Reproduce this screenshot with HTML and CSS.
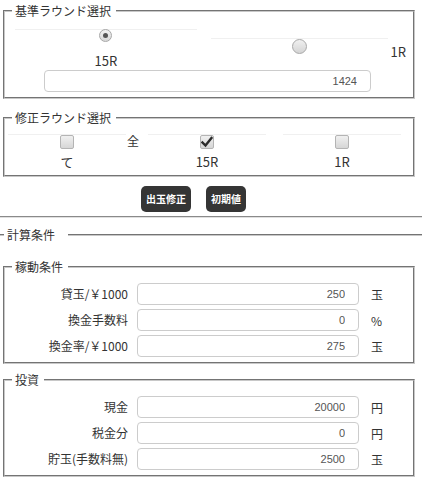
FILE: index.html
```html
<!DOCTYPE html>
<html lang="ja">
<head>
<meta charset="utf-8">
<title>計算</title>
<link rel="stylesheet" href="styles.css">
</head>
<body>
<fieldset class="box box-base">
  <legend>基準ラウンド選択</legend>
  <div class="base-opts">
    <div class="cell cell-a">
      <span class="radio radio-on"></span>
      <span class="opt-lbl">15R</span>
    </div>
    <div class="cell cell-b">
      <span class="radio"></span>
    </div>
    <span class="side-lbl">1R</span>
  </div>
  <div class="base-input"><input class="field field-wide" type="text" value="1424" readonly></div>
</fieldset>

<fieldset class="box box-fix">
  <legend>修正ラウンド選択</legend>
  <div class="fix-opts">
    <div class="cell ccell c1"><span class="check"></span><span class="opt-lbl opt-lbl-c">て</span></div>
    <span class="all">全</span>
    <div class="cell ccell c2"><span class="check check-on"><svg width="12" height="12" viewBox="0 0 12 12"><path d="M1.5 6.5 L4.5 9.5 L10.5 2" fill="none" stroke="#2b2b2b" stroke-width="2.4" stroke-linecap="square"/></svg></span><span class="opt-lbl opt-lbl-c">15R</span></div>
    <div class="cell ccell c3"><span class="check"></span><span class="opt-lbl opt-lbl-c">1R</span></div>
  </div>
</fieldset>

<div class="actions">
  <button class="btn" type="button">出玉修正</button>
  <button class="btn" type="button">初期値</button>
</div>
<div class="rule"></div>

<fieldset class="calc">
  <legend>計算条件</legend>

  <fieldset class="box box-rows box-work">
    <legend>稼動条件</legend>
    <div class="rows">
      <label class="row-lbl">貸玉/￥1000</label><input class="field" type="text" value="250" readonly><span class="unit">玉</span>
      <label class="row-lbl">換金手数料</label><input class="field" type="text" value="0" readonly><span class="unit">%</span>
      <label class="row-lbl">換金率/￥1000</label><input class="field" type="text" value="275" readonly><span class="unit">玉</span>
    </div>
  </fieldset>

  <fieldset class="box box-rows box-invest">
    <legend>投資</legend>
    <div class="rows">
      <label class="row-lbl">現金</label><input class="field" type="text" value="20000" readonly><span class="unit">円</span>
      <label class="row-lbl">税金分</label><input class="field" type="text" value="0" readonly><span class="unit">円</span>
      <label class="row-lbl">貯玉(手数料無)</label><input class="field" type="text" value="2500" readonly><span class="unit">玉</span>
    </div>
  </fieldset>
</fieldset>
</body>
</html>
```

FILE: styles.css
```css
html, body {
  margin: 0;
  padding: 0;
  background: #fff;
}
body {
  font-family: "Noto Sans CJK JP", "Liberation Sans", sans-serif;
  font-size: 12px;
  color: #333;
  width: 422px;
}

.box {
  margin: 2px 7px 0 3px;
  padding: 0 7px 5px 7px;
  border: 2px groove #c8c8c8;
  min-inline-size: 0;
}
.box legend {
  padding: 0 5px 0 3px;
  font-size: 12px;
  line-height: 18px;
  color: #333;
}

/* 基準ラウンド */
.box-base {
  padding-top: 9px;
}
.base-opts {
  display: flex;
  align-items: flex-start;
  padding-left: 3px;
}
.cell {
  border-top: 1px solid #f0f0f0;
  display: flex;
  flex-direction: column;
  align-items: center;
}
.cell-a {
  width: 182px;
}
.cell-b {
  width: 177px;
  margin-left: 14px;
  margin-top: 9px;
}
.radio {
  box-sizing: border-box;
  width: 13px;
  height: 13px;
  border-radius: 50%;
  border: 1px solid #a8a8a8;
  background: linear-gradient(#f2f2f2, #d8d8d8);
  position: relative;
  display: block;
}
.cell-b .radio {
  width: 15px;
  height: 15px;
  margin-top: 0;
  background: linear-gradient(#f0f0f0, #d4d4d4);
}
.radio-on {
  margin-top: -1px;
}
.radio-on::after {
  content: "";
  position: absolute;
  left: 3px;
  top: 3px;
  width: 5px;
  height: 5px;
  border-radius: 50%;
  background: #555;
}
.opt-lbl {
  font-size: 13px;
  line-height: 16px;
  margin-top: 11px;
  color: #333;
}
.side-lbl {
  font-size: 13px;
  line-height: 16px;
  margin-left: 3px;
  margin-top: 15px;
}
.base-input {
  margin-left: 32px;
  margin-top: 1px;
}

.field {
  box-sizing: border-box;
  display: block;
  height: 22px;
  border: 1px solid #ccc;
  border-radius: 4px;
  background: #fff;
  font-family: "Liberation Sans", Arial, sans-serif;
  font-size: 11px;
  color: #555;
  text-align: right;
  padding: 0 13px 0 4px;
  margin: 0;
  outline: none;
}
.field-wide {
  width: 327px;
}

/* 修正ラウンド */
.box-fix {
  margin-top: 10px;
  padding-top: 7px;
}
.fix-opts {
  display: flex;
  align-items: flex-start;
  margin-left: -4px;
}
.ccell {
  width: 118px;
}
.check {
  box-sizing: border-box;
  display: flex;
  align-items: center;
  justify-content: center;
  width: 14px;
  height: 14px;
  margin-top: 0;
  border: 1px solid #b4b4b4;
  border-radius: 2px;
  background: linear-gradient(#f0f0f0, #d6d6d6);
}
.opt-lbl-c {
  margin-top: 5px;
}
.all {
  font-size: 12px;
  line-height: 16px;
  margin-top: -1px;
  margin-left: 1px;
  width: 12px;
}
.c2 {
  margin-left: 9px;
}
.c3 {
  margin-left: 17px;
}

/* buttons */
.actions {
  display: flex;
  gap: 15px;
  padding-left: 141px;
  margin-top: 9px;
}
.btn {
  height: 26px;
  padding: 0 5px;
  border: none;
  border-radius: 5px;
  background: #353535;
  color: #fff;
  font-family: "Noto Sans CJK JP", sans-serif;
  font-size: 10px;
  font-weight: bold;
  line-height: 26px;
}
.rule {
  margin-top: 4px;
  height: 0;
  border-top: 1px solid #8a8a8a;
  border-bottom: 1px solid #e0e0e0;
}

/* 計算条件 */
.calc {
  margin: 8px 0 0 0;
  padding: 0 0 8px 0;
  border: none;
  border-top: 2px groove #c8c8c8;
  min-inline-size: 0;
}
.calc > legend {
  margin-left: 4px;
  padding: 0 13px 0 3px;
  font-size: 12px;
  line-height: 18px;
}
.box-rows {
  padding-top: 7px;
}
.box-work {
  margin-top: 14px;
}
.box-invest {
  margin-top: 7px;
}
.rows {
  display: grid;
  grid-template-columns: 116px 222px auto;
  column-gap: 9px;
  row-gap: 4px;
  align-items: center;
}
.row-lbl {
  text-align: right;
  font-size: 12px;
  line-height: 16px;
  color: #333;
}
.unit {
  margin-left: 3px;
  font-size: 12px;
  color: #333;
}
```
